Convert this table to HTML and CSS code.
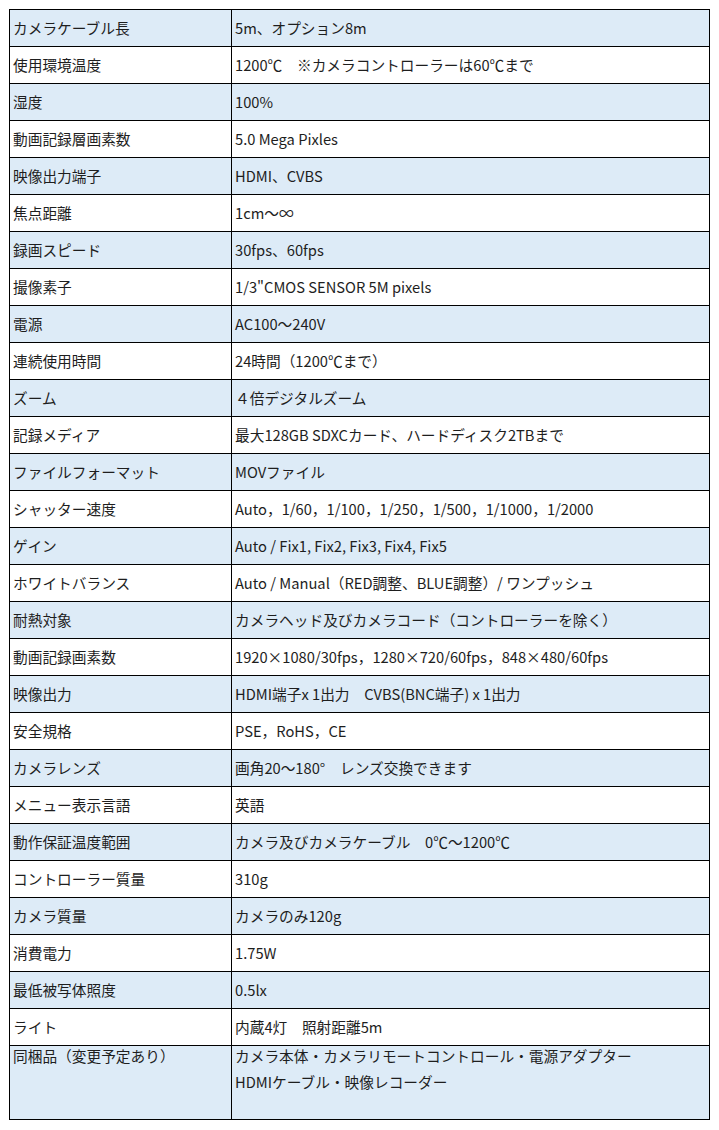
FILE: index.html
```html
<!DOCTYPE html>
<html lang="ja">
<head>
<meta charset="utf-8">
<link rel="stylesheet" href="styles.css">
</head>
<body>
<table class="spec">
<tbody>
<tr><td class="k">カメラケーブル長</td><td class="v">5m、オプション8m</td></tr>
<tr><td class="k">使用環境温度</td><td class="v">1200℃　※カメラコントローラーは60℃まで</td></tr>
<tr><td class="k">湿度</td><td class="v">100%</td></tr>
<tr><td class="k">動画記録層画素数</td><td class="v">5.0 Mega Pixles</td></tr>
<tr><td class="k">映像出力端子</td><td class="v">HDMI、CVBS</td></tr>
<tr><td class="k">焦点距離</td><td class="v">1cm～∞</td></tr>
<tr><td class="k">録画スピード</td><td class="v">30fps、60fps</td></tr>
<tr><td class="k">撮像素子</td><td class="v">1/3"CMOS SENSOR 5M pixels</td></tr>
<tr><td class="k">電源</td><td class="v">AC100～240V</td></tr>
<tr><td class="k">連続使用時間</td><td class="v">24時間（1200℃まで）</td></tr>
<tr><td class="k">ズーム</td><td class="v">４倍デジタルズーム</td></tr>
<tr><td class="k">記録メディア</td><td class="v">最大128GB SDXCカード、ハードディスク2TBまで</td></tr>
<tr><td class="k">ファイルフォーマット</td><td class="v">MOVファイル</td></tr>
<tr><td class="k">シャッター速度</td><td class="v">Auto，1/60，1/100，1/250，1/500，1/1000，1/2000</td></tr>
<tr><td class="k">ゲイン</td><td class="v">Auto / Fix1, Fix2, Fix3, Fix4, Fix5</td></tr>
<tr><td class="k">ホワイトバランス</td><td class="v">Auto / Manual（RED調整、BLUE調整）/ ワンプッシュ</td></tr>
<tr><td class="k">耐熱対象</td><td class="v">カメラヘッド及びカメラコード（コントローラーを除く）</td></tr>
<tr><td class="k">動画記録画素数</td><td class="v">1920×1080/30fps，1280×720/60fps，848×480/60fps</td></tr>
<tr><td class="k">映像出力</td><td class="v">HDMI端子x 1出力　CVBS(BNC端子) x 1出力</td></tr>
<tr><td class="k">安全規格</td><td class="v">PSE，RoHS，CE</td></tr>
<tr><td class="k">カメラレンズ</td><td class="v">画角20～180°　レンズ交換できます</td></tr>
<tr><td class="k">メニュー表示言語</td><td class="v">英語</td></tr>
<tr><td class="k">動作保証温度範囲</td><td class="v">カメラ及びカメラケーブル　0℃～1200℃</td></tr>
<tr><td class="k">コントローラー質量</td><td class="v">310g</td></tr>
<tr><td class="k">カメラ質量</td><td class="v">カメラのみ120g</td></tr>
<tr><td class="k">消費電力</td><td class="v">1.75W</td></tr>
<tr><td class="k">最低被写体照度</td><td class="v">0.5lx</td></tr>
<tr><td class="k">ライト</td><td class="v">内蔵4灯　照射距離5m</td></tr>
<tr class="tall"><td class="k"><div class="lines">同梱品（変更予定あり）</div></td><td class="v"><div class="lines">カメラ本体・カメラリモートコントロール・電源アダプター<br>HDMIケーブル・映像レコーダー</div></td></tr>
</tbody>
</table>
</body>
</html>
```
FILE: styles.css
```css
html, body {
  margin: 0;
  padding: 0;
  background: #ffffff;
}
body {
  padding: 9px;
  font-family: "Noto Sans CJK JP", "Noto Sans", sans-serif;
  font-size: 14.7px;
  color: #1e1e1e;
}
.spec {
  border-collapse: collapse;
  width: 701px;
  table-layout: fixed;
}
.spec td {
  border: 1px solid #000000;
  height: 37px;
  padding: 0 3px;
  box-sizing: border-box;
  vertical-align: middle;
  white-space: nowrap;
  line-height: 20px;
}
.spec td.k {
  width: 222px;
}
.spec tr:nth-child(odd) td {
  background: #ddebf7;
}
.spec tr.tall td {
  height: 74px;
  vertical-align: top;
  padding-top: 0;
  line-height: 26px;
}
.lines {
  margin-top: -3px;
}
```
